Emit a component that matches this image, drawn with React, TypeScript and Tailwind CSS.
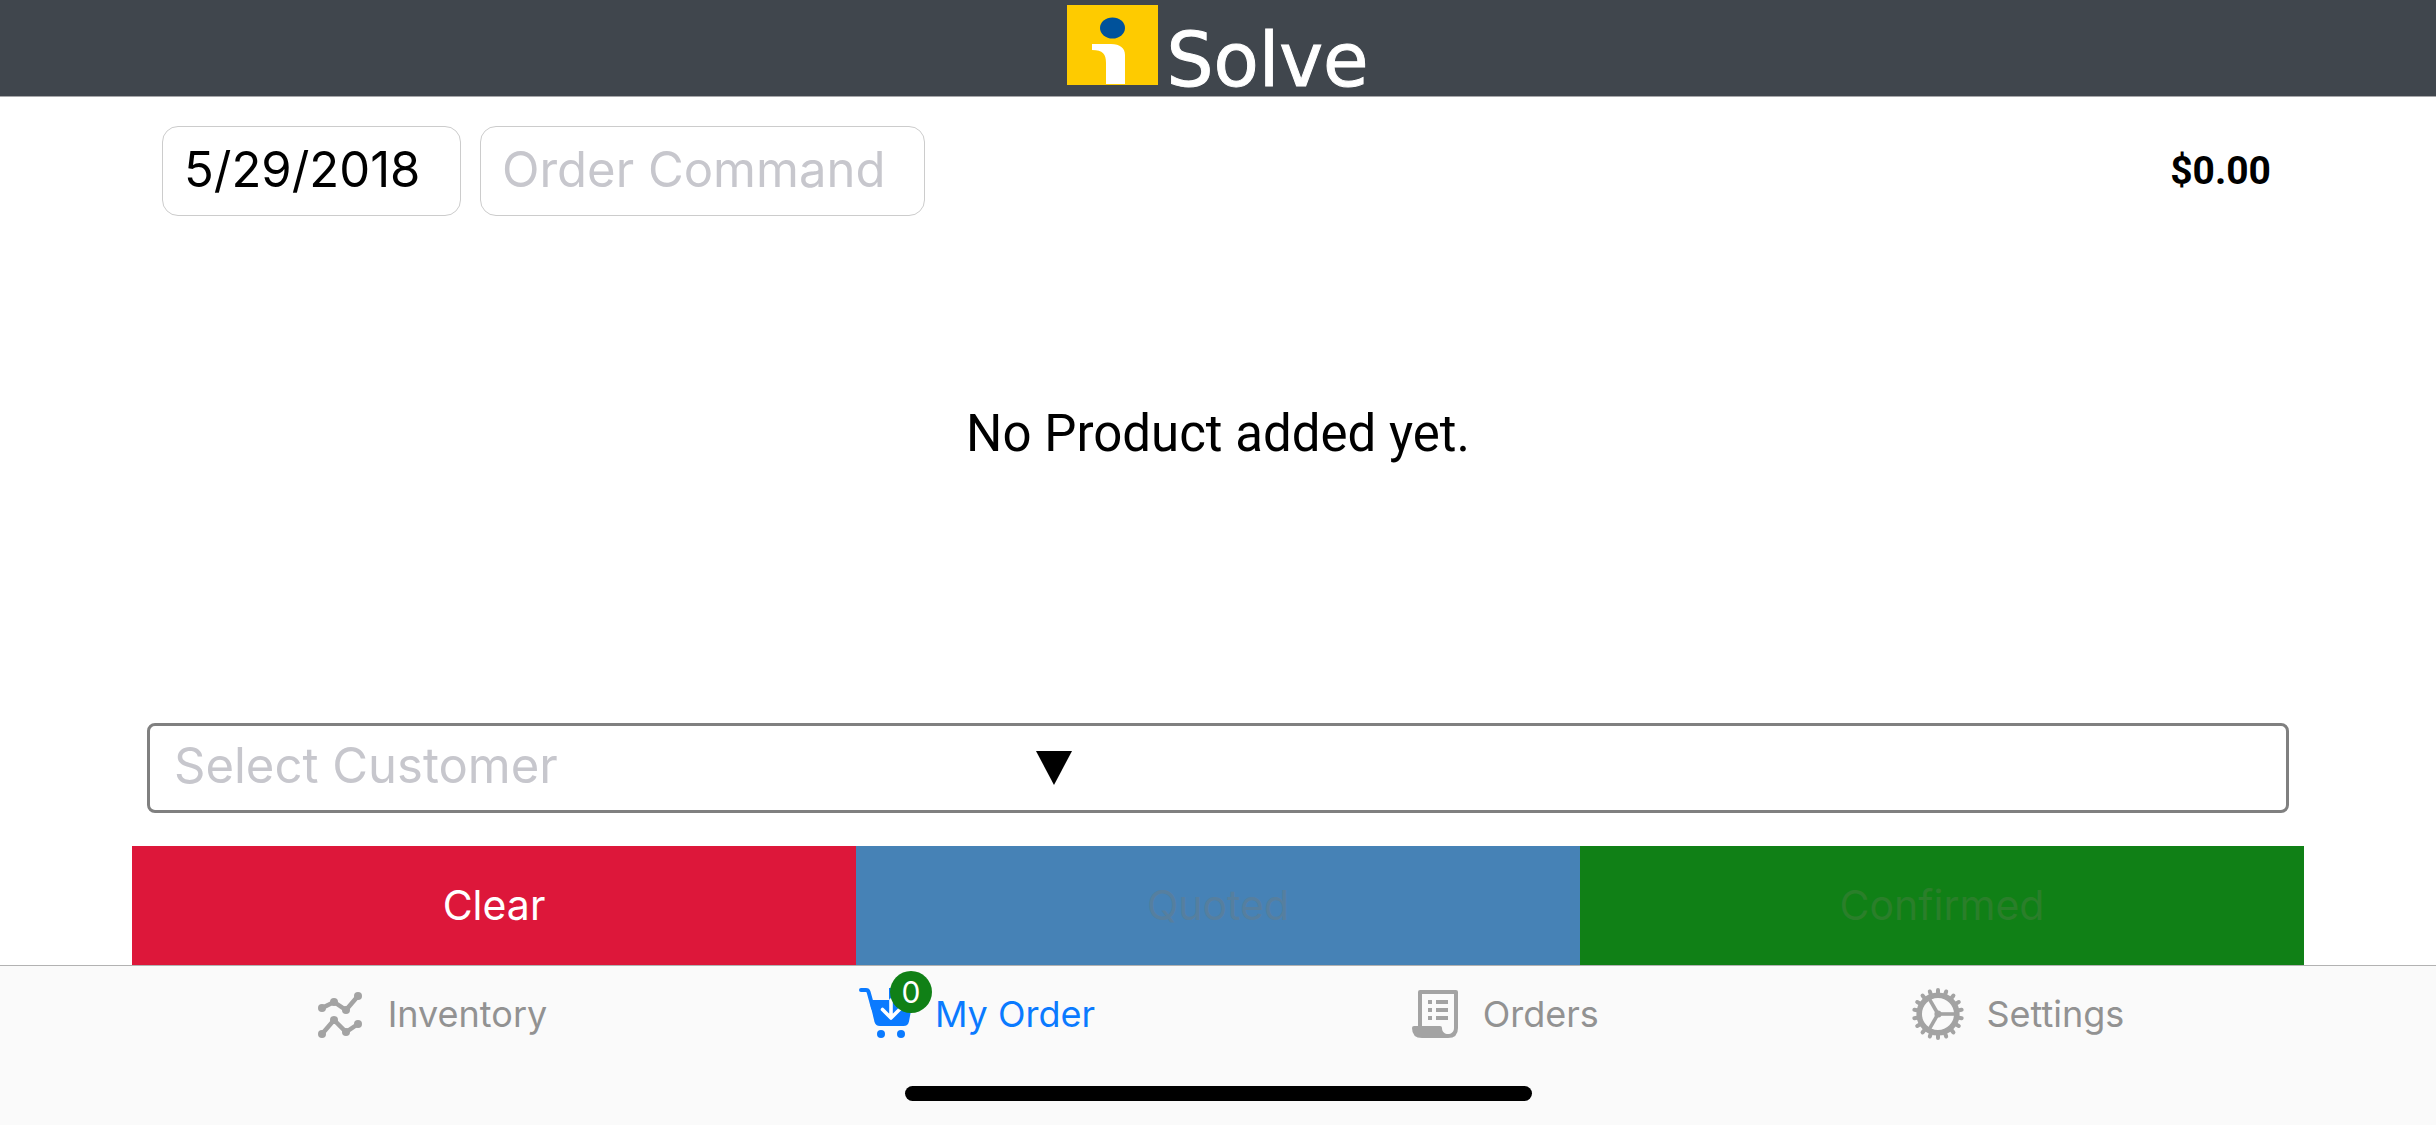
import { ReactNode } from "react";

function Logo() {
  return (
    <div className="flex h-20 items-end gap-2" aria-label="iSolve">
      <svg viewBox="0 0 91 80" className="h-20 w-[91px]" aria-hidden="true">
        <rect width="91" height="80" fill="#fecb00" />
        <ellipse cx="45.500" cy="23" rx="12.500" ry="10.500" fill="#00529b" />
        <path d="M25 39H44C53 39 58 43 58 50V79H39V58C39 49 36 45 25 45Z" fill="#fff" />
      </svg>
      <span className="font-['DejaVu_Sans'] text-[74px] leading-[50px] text-white [-webkit-text-stroke:1px_white]">
        Solve
      </span>
    </div>
  );
}

function InventoryIcon() {
  const dots = [
    [10, 22], [22, 16], [34, 24], [46, 10],
    [10, 48], [22, 34], [34, 46], [46, 38],
  ];
  return (
    <svg viewBox="0 0 56 56" className="size-14" aria-hidden="true">
      <g fill="none" stroke="currentColor" strokeWidth="4.500">
        <path d="M10 22L22 16L34 24L46 10" />
        <path d="M10 48L22 34L34 46L46 38" />
      </g>
      {dots.map(([x, y]) => (
        <circle key={`${x}-${y}`} cx={x} cy={y} r="4" fill="currentColor" />
      ))}
    </svg>
  );
}

function CartIcon() {
  return (
    <svg viewBox="0 0 56 56" className="size-14" aria-hidden="true">
      <path d="M2 4H7Q9 4 9.600 6L14 22" fill="none" stroke="currentColor" strokeWidth="4" strokeLinecap="round" />
      <path d="M11 14H54L50 35.500Q49 40 44.500 40H21Q16.500 40 15.400 35.500L11 17Z" fill="currentColor" />
      <rect x="30" y="2" width="4" height="12" fill="currentColor" />
      <path d="M32 14V31M23.500 23.500L32 32L40.500 23.500" fill="none" stroke="#fff" strokeWidth="3.600" strokeLinecap="round" strokeLinejoin="round" />
      <circle cx="22" cy="48" r="4" fill="currentColor" />
      <circle cx="42" cy="48" r="4" fill="currentColor" />
    </svg>
  );
}

function OrdersIcon() {
  return (
    <svg viewBox="0 0 56 56" className="size-14" fill="currentColor" aria-hidden="true">
      <path d="M7 40H33Q35 40 35 42C35 46 38 48 41 48S47 46 47 42V8H15V40H11V6Q11 4 13 4H49Q51 4 51 6V42Q51 52 41 52H15Q5 52 5 42Q5 40 7 40Z" />
      <path d="M21 14h4v4h-4zM29 14h12v4h-12zM21 22h4v4h-4zM29 22h12v4h-12zM21 30h4v4h-4zM29 30h12v4h-12z" />
    </svg>
  );
}

function SettingsIcon() {
  const teeth = Array.from({ length: 18 }, (_, i) => i * 20 + 10);
  return (
    <svg viewBox="-28 -28 56 56" className="size-14" fill="none" stroke="currentColor" aria-hidden="true">
      <circle r="18.800" strokeWidth="5.600" />
      <g strokeWidth="4" strokeLinecap="round">
        {teeth.map((angle) => (
          <path key={angle} d="M0 -20V-24" transform={`rotate(${angle - 10})`} />
        ))}
      </g>
      <g strokeWidth="3.600">
        <path d="M0 0H18" />
        <path d="M0 0H18" transform="rotate(120)" />
        <path d="M0 0H18" transform="rotate(240)" />
      </g>
      <circle r="3.600" fill="currentColor" stroke="none" />
    </svg>
  );
}

function Tab({ label, icon, active, badge }: { label: string; icon: ReactNode; active?: boolean; badge?: string }) {
  return (
    <a
      href="#"
      aria-current={active ? "page" : undefined}
      className={`flex items-center gap-5 ${active ? "text-[#0a7aff]" : "text-[#929292]"}`}
    >
      <span className={`relative ${active ? "" : "text-[#a3a3a3]"}`}>
        {icon}
        {badge && (
          <span className="absolute -top-[15px] left-[31px] flex size-[42px] items-center justify-center rounded-full bg-[#108016] text-[30px] leading-none text-white">
            {badge}
          </span>
        )}
      </span>
      <span className="text-[36px] leading-[54px]">{label}</span>
    </a>
  );
}

export default function App() {
  return (
    <div className="flex min-h-screen flex-col bg-white font-['Inter',sans-serif] text-black">
      <header className="flex justify-center border-b border-[#a7a7aa] bg-[#40464d] pt-[5px] pb-[11px]">
        <Logo />
      </header>

      <main className="mx-[132px] flex flex-1 flex-col">
        <div className="mt-[29px] flex items-center gap-[19px] pr-[33px] pl-[30px]">
          <input
            aria-label="Order date"
            defaultValue="5/29/2018"
            className="h-[90px] w-[299px] rounded-2xl border border-[#cccccc] px-[21px] pb-1 text-[49px]"
          />
          <input
            aria-label="Order Command"
            placeholder="Order Command"
            className="h-[90px] w-[445px] rounded-2xl border border-[#cccccc] px-[21px] pb-1 text-[49px] placeholder:text-[#c7c7cd]"
          />
          <output className="ml-auto font-['Roboto'] text-[39px] font-bold">$0.00</output>
        </div>

        <div className="flex-1 pt-[188px] text-center font-['Roboto'] text-[51px] leading-[60px]">
          <p>No Product added yet.</p>
        </div>

        <div className="mx-[15px] flex h-[90px] items-center rounded-lg border-3 border-[#808080]">
          <select
            aria-label="Select Customer"
            className="h-full w-[41.500%] appearance-none bg-transparent pb-1 pl-6 text-[49px] text-[#c7c7cd]"
          >
            <option>Select Customer</option>
          </select>
          <svg viewBox="0 0 36 34" className="h-[34px] w-9" aria-hidden="true">
            <path d="M0 0H36L18 34Z" />
          </svg>
        </div>

        <div className="mt-[33px] grid h-[119px] grid-cols-3 text-[41px]">
          <button className="bg-[#dd173a] text-white">Clear</button>
          <button disabled className="bg-[#4682b6] text-[#567f9f]">Quoted</button>
          <button disabled className="bg-[#108016] text-[#2a7f2a]">Confirmed</button>
        </div>
      </main>

      <footer className="border-t border-[#b2b2b2] bg-[#fafafa] pt-5 pb-6">
        <nav className="flex justify-evenly">
          <Tab label="Inventory" icon={<InventoryIcon />} />
          <Tab label="My Order" icon={<CartIcon />} active badge="0" />
          <Tab label="Orders" icon={<OrdersIcon />} />
          <Tab label="Settings" icon={<SettingsIcon />} />
        </nav>
        <div className="mx-auto mt-11 h-[15px] w-[627px] rounded-full bg-black" />
      </footer>
    </div>
  );
}
